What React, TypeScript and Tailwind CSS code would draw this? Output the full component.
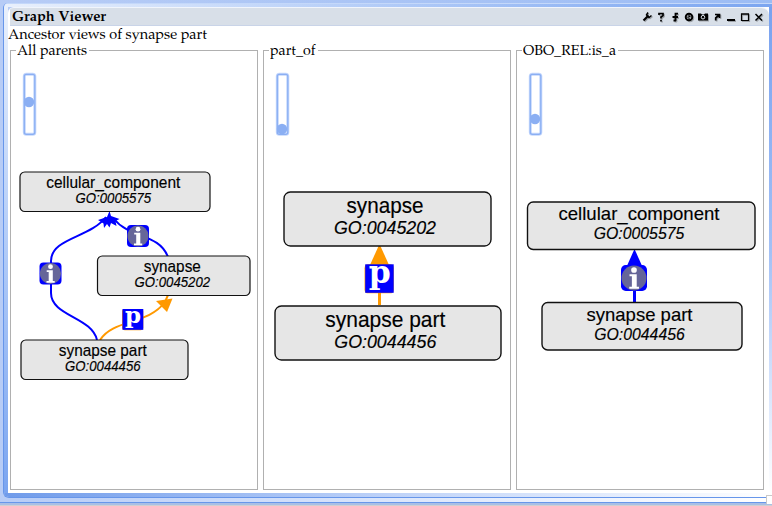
import React from "react";

const serif = "font-['Palatino_Linotype','Palatino','TeX_Gyre_Pagella','Noto_Serif','DejaVu_Serif','Liberation_Serif',serif]";

type NodeProps = { x: number; y: number; w: number; h: number; cx: number; title: string; id: string; ty: number; iy: number; tw: number; iw: number; size: number; small: number; stroke?: number };

function TermNode({ x, y, w, h, cx, title, id, ty, iy, tw, iw, size, small, stroke = 1.2 }: NodeProps) {
  return (
    <g>
      <rect x={x} y={y} width={w} height={h} rx={size * 0.3} fill="#e6e6e6" stroke="#111" strokeWidth={stroke} />
      <g fill="#000" stroke="#000" strokeWidth="0.15" textAnchor="middle" fontFamily="'Liberation Sans', Arial, sans-serif">
        <text x={cx} y={ty} fontSize={size} textLength={tw} lengthAdjust="spacingAndGlyphs">{title}</text>
        <text x={cx} y={iy} fontSize={small} fontStyle="italic" textLength={iw} lengthAdjust="spacingAndGlyphs">{id}</text>
      </g>
    </g>
  );
}

function IsA({ x, y, s }: { x: number; y: number; s: number }) {
  return (
    <g transform={`translate(${x} ${y}) scale(${s / 22})`}>
      <rect width="22" height="22" rx="4" fill="#00f" />
      <circle cx="11" cy="11" r="10.6" fill="#666699" />
      <circle cx="11" cy="4.2" r="2.4" fill="#fff" />
      <path d="M7.2 7.8H13.3V18.4H15.2V20.2H7V18.4H9.2V9.6H7.2Z" fill="#fff" />
    </g>
  );
}

function PartOf({ x, y, s }: { x: number; y: number; s: number }) {
  return (
    <g transform={`translate(${x} ${y}) scale(${s / 22})`}>
      <rect x="-.5" y="0" width="22.5" height="22.4" rx="3" fill="#f90" />
      <rect width="22" height="22" fill="#00f" />
      <text x="11.2" y="14.8" textAnchor="middle" fontSize="24" fontWeight="bold" fill="#fff" fontFamily="'DejaVu Serif', serif" textLength="17" lengthAdjust="spacingAndGlyphs">p</text>
    </g>
  );
}

function ZoomSlider({ x, value }: { x: number; value: number }) {
  return (
    <g>
      <rect x={x + 0.3} y="74.3" width="10.5" height="60" rx="2" fill="#fff" stroke="#c4d7fc" strokeWidth="3" />
      <rect x={x + 0.3} y="74.3" width="10.5" height="60" rx="2" fill="none" stroke="#8baff3" strokeWidth="1.3" />
      <circle cx={x + 5} cy={value} r="5.2" fill="#8baff3" />
    </g>
  );
}

function Panel({ label, labelWidth, left, children }: { label: string; labelWidth: number; left: number; children: React.ReactNode }) {
  return (
    <section className="relative h-[440px] w-[248px] shrink-0 border border-[#b0b0b0] bg-white">
      <h2 className={`absolute -top-[10px] left-[5px] bg-white px-[1px] ${serif}`}>
        <svg className="block h-[18px]" width={labelWidth + 1} height="18">
          <text x="0" y="14" fontSize="14" textLength={labelWidth} lengthAdjust="spacingAndGlyphs">{label}</text>
        </svg>
      </h2>
      <svg className="block h-[438px] w-full" viewBox={`${left} 51 246 438`}>
        {children}
      </svg>
    </section>
  );
}

function Toolbar() {
  const glyphs = (
    <>
      <path d="M643.5 20.5L648.5 15.5" strokeWidth="2.2" />
      <path d="M648 12.5L646.5 15L649 17.5L651.5 15.5" strokeWidth="1.5" />
      <path d="M659 15V13.5H663V15.5L661 17V18.5M661 19.7V21.5" strokeWidth="1.7" />
      <path d="M678 13.7H675.5V21M672.5 17H678M673.5 20.5H676" strokeWidth="1.8" />
      <circle cx="689" cy="17" r="3.3" strokeWidth="1.9" />
      <path d="M687.5 17.5L690.5 16.3M689 15V19" strokeWidth="1.1" />
      <path d="M698 13.5H701L702 14.5H704L705 13.5H708V20.5H698Z" fill="currentColor" stroke="none" />
      <circle cx="703" cy="17.2" r="1.8" stroke="#d8dfe8" strokeWidth="1" />
      <path d="M715 14.5H719.5V18M719 15L715.7 18V20.5" strokeWidth="1.7" />
      <path d="M727 20H735" strokeWidth="2" />
      <path d="M741.5 14.2H748.5V20.5H741.5ZM741 13.8H749" strokeWidth="1.2" />
      <path d="M755.5 14L762 20.5M762 14L755.5 20.5" strokeWidth="1.5" />
    </>
  );
  return (
    <svg className="h-5 w-[130px]" viewBox="640 7 130 20" fill="none" stroke="currentColor">
      <g className="text-[#9da2a8]" transform="translate(1 1)">{glyphs}</g>
      <g className="text-black">{glyphs}</g>
    </svg>
  );
}

function Viewer() {
  return (
    <div className="h-[486px] w-[761px] shrink-0 overflow-hidden rounded-tl-[6px] rounded-tr-[8px] border-t border-[#f1f5fc] bg-white">
      <header className="ml-[2px] flex h-[18px] w-[759px] items-center justify-between overflow-hidden border-b border-[#c9d4e8] bg-[#d8dfe8] pl-[2px]">
        <svg className={`h-[19px] w-[110px] ${serif}`}>
          <text x="0" y="14" fontSize="14" fontWeight="bold" textLength="94" lengthAdjust="spacingAndGlyphs">Graph Viewer</text>
        </svg>
        <div className="-mr-[1px] flex"><Toolbar /></div>
      </header>
      <svg className={`block h-[24px] w-full ${serif}`}>
        <text x="0" y="13" fontSize="14" textLength="199" lengthAdjust="spacingAndGlyphs">Ancestor views of synapse part</text>
      </svg>
      <div className="flex gap-[5px] pl-[2px]">
        <Panel label="All parents" labelWidth={70} left={11}>
          <ZoomSlider x={24} value={102} />
          <g fill="none" stroke="#00f" strokeWidth="2">
            <path d="M97 340C92 317 51 316 51 293V261C51 238 90 238 106 217" />
            <path d="M168 257C159 233 130 239 114 219" />
          </g>
          <path d="M109.5 211L111 216L119.5 219L115.5 221L116.5 226L111 223L109.5 227.5L107 224L104 228L103.5 223.5L98 220L107 217Z" fill="#00f" />
          <path d="M100 340C113 319 148 325 165 302L168 295" fill="none" stroke="#f90" strokeWidth="2" />
          <path d="M172.5 298.5L156 301L167 312Z" fill="#f90" />
          <IsA x={127} y={225} s={22} /><IsA x={39.5} y={262.5} s={22} />
          <PartOf x={122.5} y={309} s={20.8} />
          <TermNode x={20} y={172} w={190} h={39.5} cx={113.3} title="cellular_component" id="GO:0005575" ty={188.3} iy={203.3} tw={134} iw={75.5} size={15.9} small={14} />
          <TermNode x={97.5} y={256} w={152.5} h={39.5} cx={172.3} title="synapse" id="GO:0045202" ty={272.3} iy={287.3} tw={57} iw={75.5} size={15.9} small={14} />
          <TermNode x={21} y={340} w={167} h={39.5} cx={102.8} title="synapse part" id="GO:0044456" ty={356.3} iy={371.3} tw={88} iw={75.5} size={15.9} small={14} />
        </Panel>
        <Panel label="part_of" labelWidth={45.5} left={264}>
          <ZoomSlider x={277} value={129} />
          <path d="M379.5 305V264" stroke="#f90" strokeWidth="3" />
          <path d="M379.5 244L370 265H389Z" fill="#f90" />
          <PartOf x={365.2} y={264.3} s={28.5} />
          <TermNode x={284} y={192} w={207} h={54} cx={385} title="synapse" id="GO:0045202" ty={213} iy={234} tw={77} iw={102} size={21.3} small={18.7} stroke={1.4} />
          <TermNode x={275} y={306} w={226} h={54} cx={385.3} title="synapse part" id="GO:0044456" ty={327} iy={348} tw={120} iw={102} size={21.3} small={18.7} stroke={1.4} />
        </Panel>
        <Panel label="OBO_REL:is_a" labelWidth={93} left={517}>
          <ZoomSlider x={530} value={119} />
          <path d="M634.5 303V265" stroke="#00f" strokeWidth="3" />
          <path d="M634.5 249L626 268H643Z" fill="#00f" />
          <IsA x={621} y={265} s={26} />
          <TermNode x={527.5} y={202} w={227.5} h={47.5} cx={639} title="cellular_component" id="GO:0005575" ty={220.3} iy={239.2} tw={161} iw={90.5} size={19} small={16.6} stroke={1.4} />
          <TermNode x={542} y={302.5} w={200} h={47.5} cx={639.5} title="synapse part" id="GO:0044456" ty={321.3} iy={340.2} tw={106} iw={90.5} size={19} small={16.6} stroke={1.4} />
        </Panel>
      </div>
    </div>
  );
}

export default function App() {
  return (
    <main className="relative flex h-[506px] w-[772px] flex-col overflow-hidden bg-[#b7ccf6] text-black">
      <div className="h-[3px] shrink-0 bg-linear-to-r from-[#b7ccf6] to-[#9cbcf4]" />
      <div className="flex h-[495px] shrink-0 bg-linear-to-r from-[#b7ccf6] to-white pl-[3px]">
        <div className="flex w-[769px] flex-col overflow-hidden rounded-tl-[5px] rounded-bl-[6px] border-b border-l border-[#6796ea]">
          <div className="h-[4px] shrink-0 border-t border-[#c4d8fa] bg-linear-to-r from-[#e9f0fc] to-[#7ba5f0]" />
          <div className="flex h-[486px] shrink-0">
            <div className="w-[4px] shrink-0 bg-linear-to-b from-[#e9f0fc] to-[#7ba5f0]" />
            <Viewer />
            <div className="w-[3px] shrink-0 bg-linear-to-b from-[#79a2ef] via-[#a3c0f5] to-white" />
          </div>
          <div className="h-[4px] shrink-0 bg-linear-to-r from-[#709bea] via-[#bed2f8] to-white" />
        </div>
      </div>
      <div className="h-[4px] shrink-0 bg-linear-to-r from-[#b7ccf6] to-white" />
      <div className="h-px shrink-0 bg-[#6796ea]" />
      <div className="h-[2px] shrink-0 bg-[#a9bfe5]" />
      <div className="h-px shrink-0 bg-[#cfd0d2]" />
      <div className="absolute right-0 bottom-[2px] h-[9px] w-[6px] border-t border-l border-[#c9c9c9] bg-white" />
    </main>
  );
}
